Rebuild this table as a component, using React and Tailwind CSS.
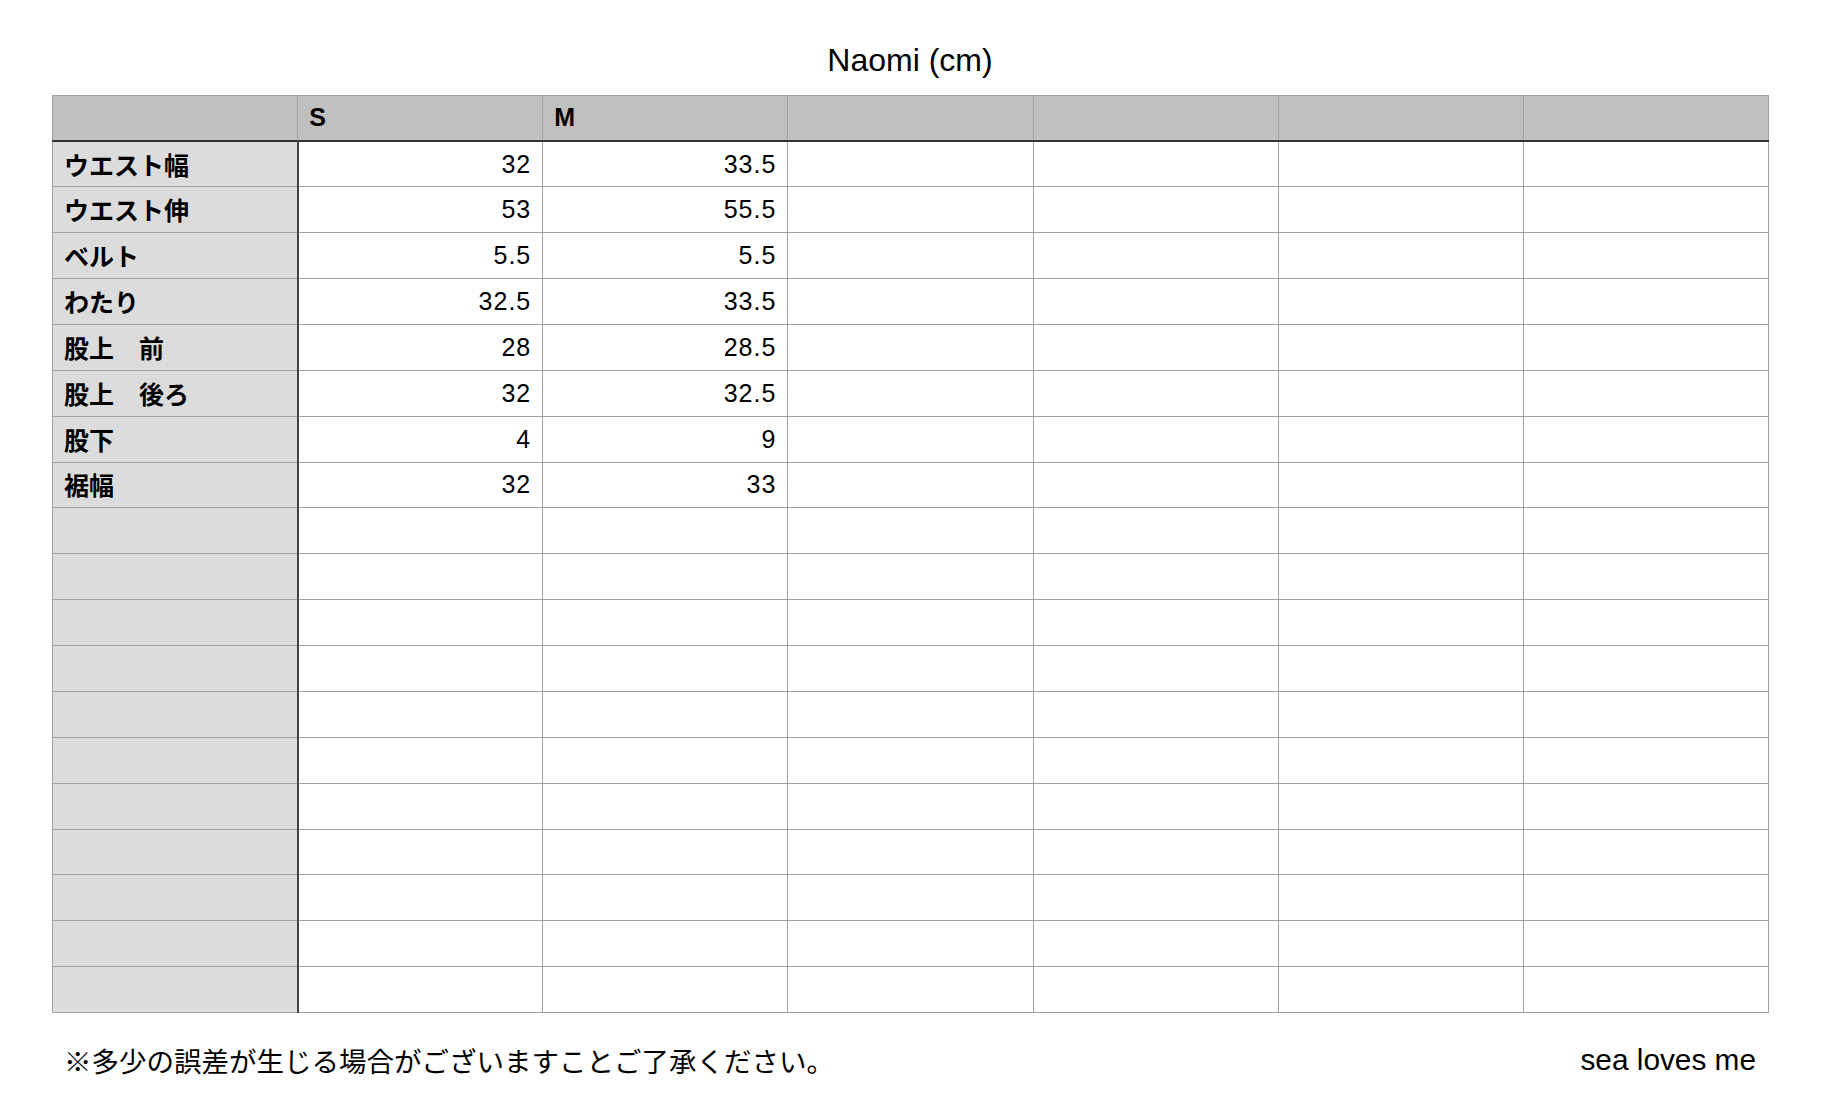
import React from "react";

const rows = [
  ["ウエスト幅", "32", "33.5"],
  ["ウエスト伸", "53", "55.5"],
  ["ベルト", "5.5", "5.5"],
  ["わたり", "32.5", "33.5"],
  ["股上　前", "28", "28.5"],
  ["股上　後ろ", "32", "32.5"],
  ["股下", "4", "9"],
  ["裾幅", "32", "33"],
];
while (rows.length < 19) rows.push(["", "", ""]);

const latin = { fontFamily: '"Liberation Sans", Arial, sans-serif' };
const jp = { fontFamily: '"Noto Sans CJK JP", "Noto Sans", sans-serif' };

export default function App() {
  return (
    <div className="w-[1830px] h-[1118px] bg-white text-black">
      <div className="ml-[52px] w-[1716px] pt-[42px]">
        <div className="h-[36px] leading-[36px] text-center text-[32px]" style={latin}>
          Naomi (cm)
        </div>
        <table className="mt-[16.5px] w-[1716px] table-fixed border-collapse border border-[#a3a3a3]">
          <colgroup>
            {Array.from({ length: 7 }).map((_, i) => (
              <col key={i} className="w-[245.14px]" />
            ))}
          </colgroup>
          <thead>
            <tr className="h-[45.875px] bg-[#bfc1bf] border-b-2 border-b-[#333333]">
              <th className="border-r border-[#a3a3a3]"></th>
              <th className="border-r border-[#a3a3a3] text-left pl-[11px] text-[25px] font-semibold" style={latin}>S</th>
              <th className="border-r border-[#a3a3a3] text-left pl-[11px] text-[25px] font-semibold" style={latin}>M</th>
              <th className="border-r border-[#a3a3a3]"></th>
              <th className="border-r border-[#a3a3a3]"></th>
              <th className="border-r border-[#a3a3a3]"></th>
              <th></th>
            </tr>
          </thead>
          <tbody>
            {rows.map((r, i) => (
              <tr key={i} className="h-[45.875px] border-t border-[#a3a3a3]">
                <td className="bg-[#dcdcdc] border-r-2 border-r-[#444444] pl-[11px] text-[25px] font-bold leading-none whitespace-pre" style={jp}>
                  {r[0]}
                </td>
                <td className="border-r border-[#a3a3a3] text-right pr-[11px] text-[25px] tracking-[0.04em] leading-none" style={latin}>
                  {r[1]}
                </td>
                <td className="border-r border-[#a3a3a3] text-right pr-[11px] text-[25px] tracking-[0.04em] leading-none" style={latin}>
                  {r[2]}
                </td>
                <td className="border-r border-[#a3a3a3]"></td>
                <td className="border-r border-[#a3a3a3]"></td>
                <td className="border-r border-[#a3a3a3]"></td>
                <td></td>
              </tr>
            ))}
          </tbody>
        </table>
        <div className="mt-[27px] flex items-center justify-between pl-[12px] pr-[12px]">
          <div className="text-[27.5px] leading-[40px]" style={jp}>
            ※多少の誤差が生じる場合がございますことご了承ください。
          </div>
          <div className="text-[29.8px] leading-[40px]" style={latin}>
            sea loves me
          </div>
        </div>
      </div>
    </div>
  );
}
